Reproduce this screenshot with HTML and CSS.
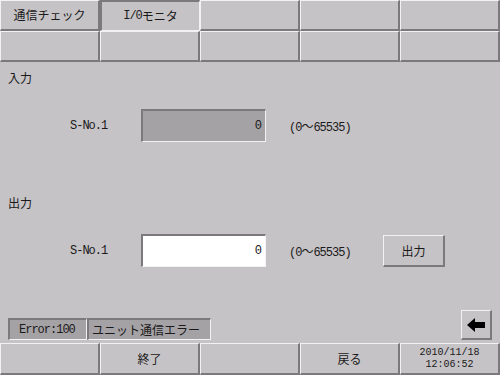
FILE: index.html
```html
<!DOCTYPE html>
<html lang="ja">
<head>
    <meta charset="UTF-8">
    <title>I/Oモニタ</title>
    <link rel="stylesheet" href="styles.css">
</head>
<body>
    <div id="screen">
        <div class="tabs">
            <div class="cell">通信チェック</div>
            <div class="cell active"><span class="mono">I/0</span>モニタ</div>
            <div class="cell"></div>
            <div class="cell"></div>
            <div class="cell"></div>
            <div class="cell"></div>
            <div class="cell"></div>
            <div class="cell"></div>
            <div class="cell"></div>
            <div class="cell"></div>
        </div>

        <div class="main">
            <div class="section-title title-in">入力</div>
            <div class="field-row">
                <span class="label mono">S-No.1</span>
                <div class="field readonly mono">0</div>
                <span class="range"><span class="mono">(0</span>〜<span class="mono">65535)</span></span>
            </div>

            <div class="section-title title-out">出力</div>
            <div class="field-row">
                <span class="label mono">S-No.1</span>
                <div class="field editable mono">0</div>
                <span class="range"><span class="mono">(0</span>〜<span class="mono">65535)</span></span>
                <button class="raised out-btn">出力</button>
            </div>

            <div class="status-row">
                <div class="status">
                    <div class="status-code mono">Error:100</div>
                    <div class="status-msg">ユニット通信エラー</div>
                </div>
                <button class="raised back-btn">
                    <svg width="18" height="14" viewBox="0 0 18 14">
                        <path d="M0 7 L8 0 L8 4 L18 4 L18 10 L8 10 L8 14 Z" fill="#000"/>
                    </svg>
                </button>
            </div>
        </div>

        <div class="footer">
            <div class="cell"></div>
            <div class="cell">終了</div>
            <div class="cell"></div>
            <div class="cell">戻る</div>
            <div class="cell clock">
                <span class="clock-line">2010/11/18</span>
                <span class="clock-line">12:06:52</span>
            </div>
        </div>
    </div>
</body>
</html>
```

FILE: styles.css
```css
body {
    margin: 0;
    background-color: #c6c3c6;
    font-family: "Noto Sans CJK JP", sans-serif;
    font-size: 12px;
    color: #1a1a1a;
}
#screen {
    width: 500px;
    height: 375px;
    display: flex;
    flex-direction: column;
    overflow: hidden;
}
.mono {
    font-family: "Liberation Mono", monospace;
    font-size: 12px;
    letter-spacing: -1px;
}
.tabs, .footer {
    display: grid;
    grid-template-columns: repeat(5, 100px);
}
.tabs {
    grid-auto-rows: 31px;
}
.footer {
    grid-auto-rows: 32px;
}
.cell {
    box-sizing: border-box;
    background-color: #c6c3c6;
    border-top: 1px solid #f2f2f2;
    border-left: 1px solid #f2f2f2;
    border-right: 2px solid #7b797b;
    border-bottom: 2px solid #7b797b;
    display: flex;
    align-items: center;
    justify-content: center;
    line-height: 14px;
}
.cell.active {
    border-top: 2px solid #7b797b;
    border-left: 2px solid #7b797b;
    border-right: 1px solid #f2f2f2;
    border-bottom: 1px solid #f2f2f2;
}
.clock {
    flex-direction: column;
    padding-top: 1px;
}
.clock-line {
    font-family: "Liberation Mono", monospace;
    font-size: 10px;
    line-height: 12px;
    height: 12px;
    overflow: hidden;
}
.main {
    flex: 1;
    display: flex;
    flex-direction: column;
}
.section-title {
    padding-left: 8px;
    line-height: 16px;
}
.title-in {
    margin-top: 8px;
}
.title-out {
    margin-top: 53px;
}
.field-row {
    display: flex;
    align-items: center;
    height: 33px;
    margin-top: 23px;
}
.label {
    padding-left: 70px;
    box-sizing: border-box;
    flex: 0 0 141px;
}
.field {
    box-sizing: border-box;
    width: 125px;
    height: 33px;
    border-top: 2px solid #7b797b;
    border-left: 2px solid #7b797b;
    border-bottom: 1px solid #f2f2f2;
    border-right: 1px solid #f2f2f2;
    display: flex;
    align-items: center;
    justify-content: flex-end;
    padding-right: 4px;
}
.field.readonly {
    background-color: #a5a2a5;
}
.field.editable {
    background-color: #fff;
}
.range {
    margin-left: 23px;
    width: 94px;
}
.raised {
    box-sizing: border-box;
    background-color: #c6c3c6;
    border-top: 1px solid #f2f2f2;
    border-left: 1px solid #f2f2f2;
    border-right: 2px solid #7b797b;
    border-bottom: 2px solid #7b797b;
    font-family: "Noto Sans CJK JP", sans-serif;
    font-size: 12px;
    color: #1a1a1a;
    padding: 0;
    display: flex;
    align-items: center;
    justify-content: center;
}
.out-btn {
    width: 62px;
    height: 32px;
}
.status-row {
    display: flex;
    align-items: flex-end;
    justify-content: space-between;
    margin-top: 43px;
    padding: 0 8px;
}
.status {
    display: flex;
    height: 22px;
}
.status-code, .status-msg {
    box-sizing: border-box;
    background-color: #a5a2a5;
    border-top: 2px solid #7b797b;
    border-left: 2px solid #7b797b;
    border-bottom: 1px solid #f2f2f2;
    border-right: 1px solid #f2f2f2;
    display: flex;
    align-items: center;
}
.status-code {
    width: 79px;
    padding-left: 9px;
}
.status-msg {
    width: 124px;
    padding-left: 3px;
}
.back-btn {
    width: 31px;
    height: 30px;
}
```
